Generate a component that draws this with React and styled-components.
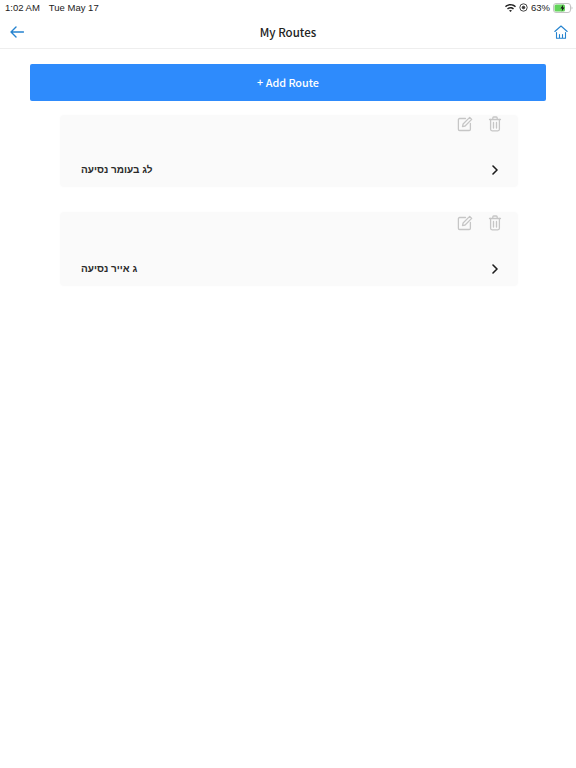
import React from 'react'
import styled, { createGlobalStyle } from 'styled-components'

const GlobalStyle = createGlobalStyle`
  html, body { margin: 0; padding: 0; background: #fff; }
  body { font-family: "Noto Sans CJK JP", "Liberation Sans", sans-serif; }
`

const Page = styled.div`
  width: 576px;
  height: 768px;
  overflow: hidden;
  background: #fff;
`

const StatusBar = styled.div`
  height: 15px;
  padding: 0 3px 0 5px;
  display: flex;
  align-items: center;
  justify-content: space-between;
  font-family: "Liberation Sans", sans-serif;
  font-size: 9.5px;
  color: #222;
`

const StatusLeft = styled.div`
  display: flex;
  gap: 9px;
`

const StatusRight = styled.div`
  display: flex;
  align-items: center;
  gap: 3px;
`

const NavBar = styled.header`
  height: 33px;
  padding: 0 8px 0 10px;
  display: flex;
  align-items: center;
  justify-content: space-between;
  border-bottom: 1px solid #eeeeee;
`

const Title = styled.h1`
  margin: 0 2px 0 0;
  font-size: 11.5px;
  font-weight: 500;
  color: #222;
`

const Content = styled.main`
  padding: 15px 30px 0;
  display: flex;
  flex-direction: column;
  align-items: center;
`

const AddButton = styled.button`
  width: 516px;
  height: 37px;
  border: none;
  border-radius: 2px;
  background: #2e8bfc;
  color: #fff;
  font-family: inherit;
  font-size: 10.8px;
  font-weight: 500;
  padding: 0 0 2px;
`

const RouteList = styled.div`
  margin: 14px 0 0 2px;
  display: flex;
  flex-direction: column;
  gap: 25px;
`

const Card = styled.section`
  width: 458px;
  height: ${({ $tall }) => ($tall ? 74 : 72)}px;
  box-sizing: border-box;
  padding: ${({ $tall }) => ($tall ? 3 : 1)}px 18px 0 21px;
  border-radius: 4px;
  background: #fafafa;
  box-shadow: 0 0 3px #fbfbfb;
  display: flex;
  flex-direction: column;
`

const Actions = styled.div`
  display: flex;
  justify-content: flex-end;
  gap: 14px;
  height: 16px;
  margin-right: -3px;
`

const Row = styled.div`
  margin-top: 32px;
  display: flex;
  align-items: center;
  justify-content: space-between;
`

const RouteName = styled.span`
  font-family: "Liberation Sans", sans-serif;
  font-size: 10px;
  font-weight: 700;
  color: #2a2a2a;
  direction: rtl;
`

const Icon = styled.svg`
  display: block;
  flex: none;
  fill: none;
  stroke: ${({ $color }) => $color};
  stroke-width: ${({ $weight }) => $weight || 1.3};
  stroke-linecap: round;
  stroke-linejoin: round;
`

const EditIcon = () => (
  <Icon $color="#c6c6c6" width="16" height="16" viewBox="0 0 16 16">
    <path d="M8.500 2.500H2.600a1.200 1.200 0 0 0-1.200 1.200v9.600a1.200 1.200 0 0 0 1.200 1.200h9.600a1.200 1.200 0 0 0 1.200-1.200V7.500" />
    <path d="M5.500 10.700l.6-2.700L12.700 1.400l2 2L8.100 10z" />
  </Icon>
)

const TrashIcon = () => (
  <Icon $color="#c6c6c6" width="16" height="16" viewBox="0 0 16 16">
    <path d="M2.500 3.500h11M5.800 3.500V2a1 1 0 0 1 1-1h2.400a1 1 0 0 1 1 1v1.500" />
    <path d="M3.600 3.500v9.800a1.500 1.500 0 0 0 1.500 1.500h5.800a1.500 1.500 0 0 0 1.500-1.500V3.500" />
    <path d="M6.500 6.500v5.500M9.500 6.500v5.500" />
  </Icon>
)

const Chevron = () => (
  <Icon $color="#1c1c1c" $weight="1.6" width="10" height="10" viewBox="0 0 10 10">
    <path d="M3 1l4 4-4 4" />
  </Icon>
)

const BackArrow = () => (
  <Icon $color="#2583cf" $weight="1.4" width="14" height="12" viewBox="0 0 14 12">
    <path d="M6 1L1 6l5 5M1 6h12.500" />
  </Icon>
)

const HomeIcon = () => (
  <Icon $color="#2583cf" $weight="1.1" width="14" height="14" viewBox="0 0 14 14">
    <path d="M.8 6.500L7 1l6.200 5.500" />
    <path d="M2.500 7.500v5.800h3V9.500M8.500 9.500v3.800h3V7.500M5.500 13.300h3" />
  </Icon>
)

const WifiIcon = () => (
  <svg width="11" height="8" viewBox="0 0 11 8" fill="#222">
    <path d="M5.500 0C3.400 0 1.500.8 0 2.200l1 1.100C2.200 2.100 3.800 1.500 5.500 1.500s3.300.6 4.500 1.800l1-1.100C9.500.8 7.600 0 5.500 0z" />
    <path d="M5.500 3C4.200 3 3 3.500 2 4.400l1 1.100C3.700 4.900 4.600 4.500 5.500 4.500s1.800.4 2.500 1l1-1.100C8 3.500 6.800 3 5.500 3z" />
    <path d="M5.500 6c-.6 0-1.100.2-1.500.6L5.500 8 7 6.600C6.600 6.200 6.100 6 5.500 6z" />
  </svg>
)

const LockIcon = () => (
  <svg width="9" height="9" viewBox="0 0 9 9" fill="none" stroke="#333" strokeWidth=".9">
    <circle cx="4.500" cy="4.500" r="3.700" />
    <circle cx="4.500" cy="4.500" r="1.300" fill="#333" />
  </svg>
)

const BatteryIcon = () => (
  <svg width="20" height="10" viewBox="0 0 20 10">
    <rect x=".5" y=".5" width="17" height="9" rx="2.500" fill="#fff" stroke="#c4c4c4" />
    <rect x="1.500" y="1.500" width="10.500" height="7" rx="1.500" fill="#63d45a" />
    <path d="M18.500 3.500v3c.6-.2 1-.8 1-1.500s-.4-1.300-1-1.500z" fill="#c4c4c4" />
    <path d="M10.300 1.500L7.500 5.500h1.800l-.6 3 2.800-4H9.700z" fill="#111" />
  </svg>
)

const routes = [
  { id: 1, name: 'לג בעומר נסיעה' },
  { id: 2, name: 'ג אייר נסיעה', tall: true },
]

export default function App() {
  return (
    <Page>
      <GlobalStyle />
      <StatusBar>
        <StatusLeft>
          <span>1:02 AM</span>
          <span>Tue May 17</span>
        </StatusLeft>
        <StatusRight>
          <WifiIcon />
          <LockIcon />
          <span>63%</span>
          <BatteryIcon />
        </StatusRight>
      </StatusBar>
      <NavBar>
        <BackArrow />
        <Title>My Routes</Title>
        <HomeIcon />
      </NavBar>
      <Content>
        <AddButton>+ Add Route</AddButton>
        <RouteList>
          {routes.map((route) => (
            <Card key={route.id} $tall={route.tall}>
              <Actions>
                <EditIcon />
                <TrashIcon />
              </Actions>
              <Row>
                <RouteName>{route.name}</RouteName>
                <Chevron />
              </Row>
            </Card>
          ))}
        </RouteList>
      </Content>
    </Page>
  )
}
